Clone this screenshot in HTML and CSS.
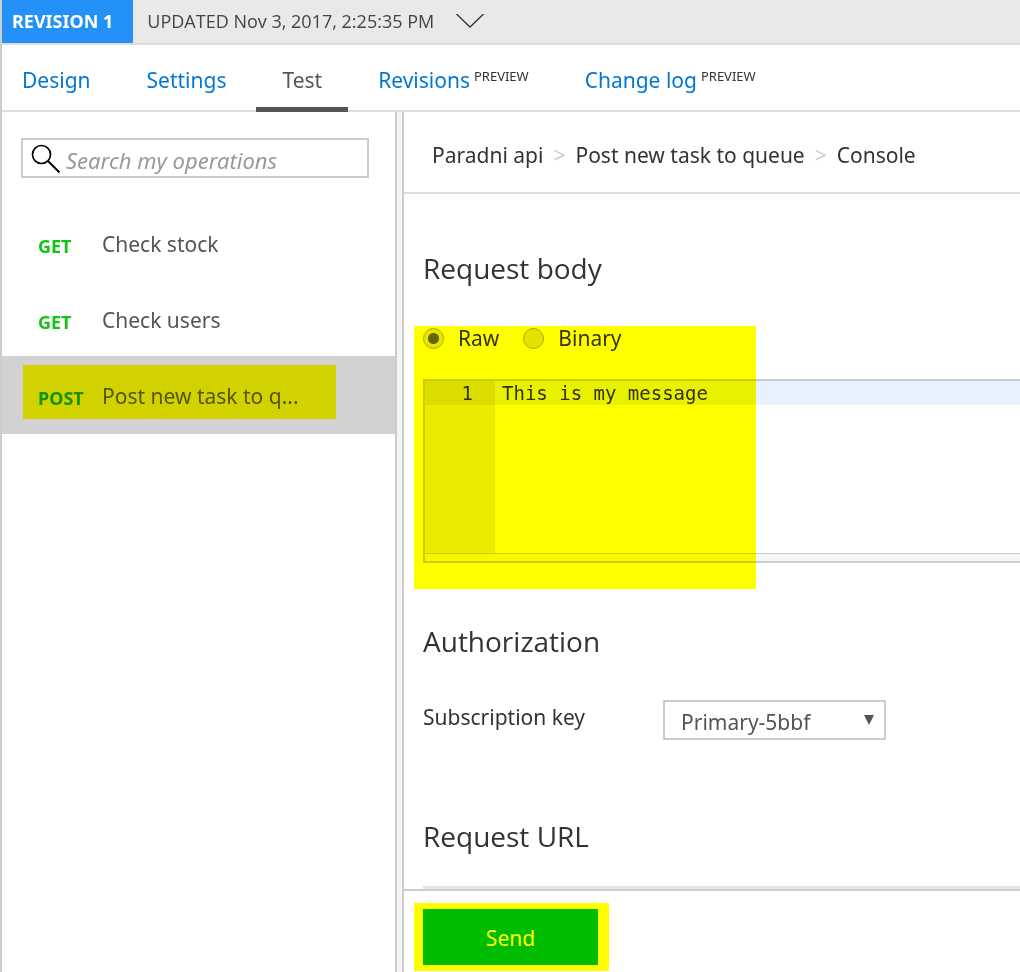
FILE: index.html
```html
<!DOCTYPE html>
<html lang="en">
<head>
<meta charset="utf-8">
<meta name="viewport" content="width=device-width, initial-scale=1">
<title>Test console</title>
<link rel="stylesheet" href="styles.css">
</head>
<body>
<header class="revision-bar">
  <strong class="revision-tag">REVISION 1</strong>
  <span class="revision-date">UPDATED Nov 3, 2017, 2:25:35 PM</span>
  <button class="revision-toggle" type="button" aria-label="Show revisions">
    <svg width="28" height="16" viewBox="0 0 28 16" fill="none" stroke="#333" stroke-width="1.3"><path d="M.5 0 14 13 27.500 0"/></svg>
  </button>
</header>
<nav class="tabs">
  <a class="tab" href="#design">Design</a>
  <a class="tab" href="#settings">Settings</a>
  <a class="tab tab-active" href="#test" aria-current="page">Test</a>
  <a class="tab" href="#revisions">Revisions<span class="tab-note">PREVIEW</span></a>
  <a class="tab" href="#changelog">Change log<span class="tab-note">PREVIEW</span></a>
</nav>
<div class="workspace">
  <aside class="sidebar">
    <label class="search">
      <svg class="search-icon" width="30" height="30" viewBox="0 0 30 30" fill="none" stroke="#000"><circle cx="10.500" cy="11.500" r="9" stroke-width="1.700"/><path d="M17 18 28.500 29.500" stroke-width="2"/></svg>
      <input class="search-input" type="search" placeholder="Search my operations" aria-label="Search my operations">
    </label>
    <ul class="operations">
      <li><a class="operation" href="#stock"><span class="method">GET</span><span class="operation-name">Check stock</span></a></li>
      <li><a class="operation" href="#users"><span class="method">GET</span><span class="operation-name">Check users</span></a></li>
      <li><a class="operation operation-active" href="#task"><span class="method method-post">POST</span><span class="operation-name">Post new task to q...</span><span class="marker marker-operation"></span></a></li>
    </ul>
  </aside>
  <div class="splitter"></div>
  <main class="console">
    <nav class="breadcrumb" aria-label="Breadcrumb">
      <span>Paradni api</span><span class="chevron">&gt;</span><span>Post new task to queue</span><span class="chevron">&gt;</span><span>Console</span>
    </nav>
    <form class="request" id="request">
      <h2 class="heading">Request body</h2>
      <div class="body-editor">
        <div class="formats">
          <label class="format"><input class="radio" type="radio" name="format" checked>Raw</label>
          <label class="format"><input class="radio" type="radio" name="format">Binary</label>
        </div>
        <div class="editor">
          <div class="editor-row">
            <div class="gutter"><div class="line-number">1</div></div>
            <textarea class="code" aria-label="Request body" spellcheck="false">This is my message</textarea>
          </div>
          <div class="resizer"></div>
        </div>
        <span class="marker marker-body"></span>
      </div>
      <h2 class="heading">Authorization</h2>
      <div class="field">
        <label class="field-label" for="key">Subscription key</label>
        <div class="picker">
          <select class="picker-select" id="key"><option>Primary-5bbf</option></select>
          <svg class="picker-arrow" width="10" height="10" viewBox="0 0 10 10" fill="#555"><path d="M0 0h10L5 10z"/></svg>
        </div>
      </div>
      <h2 class="heading">Request URL</h2>
      <div class="url"></div>
    </form>
    <footer class="actions">
      <div class="send-wrap">
        <button class="send" type="submit" form="request">Send</button>
        <span class="marker marker-send"></span>
      </div>
    </footer>
  </main>
</div>
</body>
</html>
```
FILE: styles.css
```css
* { box-sizing: border-box; }

body {
  margin: 0;
  height: 100vh;
  display: flex;
  flex-direction: column;
  overflow: hidden;
  border-left: 2px solid #ccc;
  background: #fff;
  color: #333;
  font: 21px/30px "Noto Sans", "Open Sans", sans-serif;
}

a { color: inherit; text-decoration: none; }
input, select, textarea, button { font: inherit; color: inherit; }

.revision-bar {
  display: flex;
  align-items: stretch;
  background: #e9e9e9;
  border-bottom: 2px solid #ddd;
  font: 18px/43px "Open Sans", "Noto Sans", sans-serif;
  color: #444;
}
.revision-tag {
  padding: 0 20px 0 10px;
  background: #2391f7;
  color: #fff;
  font-family: "Noto Sans", sans-serif;
}
.revision-date { padding-left: 14px; }
.revision-toggle {
  display: flex;
  align-items: center;
  margin-left: 22px;
  padding: 0;
  border: 0;
  background: none;
}

.tabs {
  display: flex;
  gap: 4px;
  border-bottom: 2px solid #ddd;
  color: #0078d7;
}
.tab {
  position: relative;
  display: flex;
  height: 65px;
  padding: 20px 26px 0;
}
.tab:first-child { padding-left: 20px; }
.tab-active { color: #555; }
.tab-active::after {
  content: "";
  position: absolute;
  left: 0;
  right: 0;
  bottom: -2px;
  height: 5px;
  background: #555;
}
.tab-note { margin-left: 4px; font-size: 13px; line-height: 22px; color: #333; }

.workspace { flex: 1; min-height: 0; display: flex; }
.sidebar { flex: 0 0 393px; min-width: 0; padding-top: 26px; color: #555; }
.search {
  display: flex;
  align-items: center;
  height: 40px;
  margin: 0 26px 0 19px;
  padding-left: 8px;
  border: 2px solid #ccc;
}
.search-icon { flex: none; }
.search-input {
  flex: 1;
  width: 100%;
  min-width: 0;
  padding: 4px 5px 0;
  border: 0;
  outline: 0;
  background: none;
  font-size: 22px;
}
.search-input::placeholder { color: #999; font-style: italic; opacity: 1; }

.operations { margin: 26px 0 0; padding: 0; list-style: none; }
.operation {
  position: relative;
  display: flex;
  align-items: center;
  height: 76px;
  padding: 4px 0 0 36px;
}
.operation-active { height: 78px; padding-top: 2px; background: #d2d2d2; }
.method { flex: 0 0 64px; font-size: 18px; font-weight: 700; color: #14c314; padding-top: 3px; }
.method-post { color: #149114; }

.splitter {
  flex: 0 0 9px;
  border: solid #ccc;
  border-width: 0 2px;
  background: #f5f5f5;
}

.console { flex: 1; min-width: 0; display: flex; flex-direction: column; }
.breadcrumb {
  flex: none;
  display: flex;
  gap: 10px;
  padding: 28px 28px 22px;
  border-bottom: 2px solid #ddd;
  white-space: nowrap;
}
.chevron { color: #ccc; }

.request { flex: 1; min-height: 0; overflow: hidden; padding: 55px 0 0 19px; }
.heading {
  margin: 0;
  font: 28px/38px "Open Sans", "Noto Sans", sans-serif;
}

.body-editor { position: relative; margin: 36px 0 59px; }
.formats { display: flex; gap: 24px; margin-bottom: 26px; }
.format { display: flex; align-items: center; gap: 14px; }
.radio {
  appearance: none;
  width: 21px;
  height: 21px;
  margin: 0;
  border: 1px solid #aaa;
  border-radius: 50%;
  background: #e2e2e2;
}
.radio:checked { background: radial-gradient(circle, #666 5px, #e6e6e6 6px); }

.editor {
  border: 2px solid #ccc;
  border-right: 0;
  font: 19px/24px "DejaVu Sans Mono", "Liberation Mono", monospace;
}
.editor-row { display: flex; height: 172px; }
.gutter { flex: 0 0 70px; background: #ebebeb; }
.line-number { padding-right: 22px; background: #dcdcdc; text-align: right; }
.code {
  flex: 1;
  min-width: 0;
  margin: 0;
  padding: 0 7px;
  border: 0;
  outline: 0;
  resize: none;
  background: linear-gradient(#e8f2fe 24px, #fff 24px);
}
.resizer { height: 8px; border-top: 1px solid #ccc; background: #f7f7f7; }

.field { display: flex; margin: 40px 0 77px; }
.field-label { width: 240px; padding-top: 2px; }
.picker { position: relative; width: 223px; }
.picker-select {
  appearance: none;
  display: block;
  width: 100%;
  height: 40px;
  padding: 3px 30px 0 16px;
  border: 2px solid #ccc;
  border-radius: 0;
  background: #fff;
  color: #555;
}
.picker-arrow { position: absolute; top: 15px; right: 12px; pointer-events: none; }
.url { height: 40px; margin-top: 31px; background: #e5e5e5; }

.actions { flex: none; padding: 18px 19px 7px; border-top: 2px solid #ccc; }
.send-wrap { position: relative; width: 175px; }
.send {
  display: block;
  width: 100%;
  height: 56px;
  padding: 2px 0 0;
  border: 0;
  background: #00bc00;
  color: #fff;
}

/* Highlighter strokes laid over the content */
.marker {
  position: absolute;
  background: #ff0;
  mix-blend-mode: multiply;
  pointer-events: none;
}
.marker-operation { top: 9px; bottom: 15px; left: 21px; width: 313px; }
.marker-body { top: 3px; bottom: -26px; left: -9px; width: 342px; }
.marker-send { top: -6px; bottom: -6px; left: -9px; right: -11px; }
```
